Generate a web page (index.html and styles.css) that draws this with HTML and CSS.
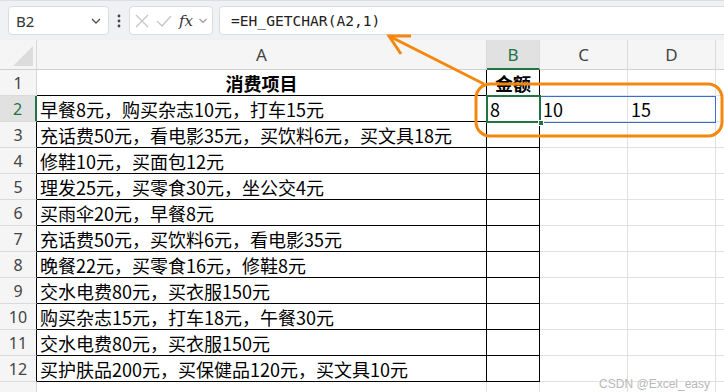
FILE: index.html
```html
<!DOCTYPE html>
<html lang="zh-CN">
<head>
    <meta charset="UTF-8">
    <title>EH_GETCHAR</title>
    <link rel="stylesheet" href="styles.css">
</head>
<body>
    <div class="toolbar">
        <div class="namebox">
            <span>B2</span>
            <svg width="12" height="8" viewBox="0 0 12 8"><path d="M2 2 L6 6 L10 2" fill="none" stroke="#555" stroke-width="1.4"/></svg>
        </div>
        <svg class="dots" width="4" height="16" viewBox="0 0 4 16"><circle cx="2" cy="3" r="1.4" fill="#444"/><circle cx="2" cy="8" r="1.4" fill="#444"/><circle cx="2" cy="13" r="1.4" fill="#444"/></svg>
        <div class="fxbox">
            <svg width="16" height="16" viewBox="0 0 16 16"><path d="M2 2 L14 14 M14 2 L2 14" stroke="#c4c4c4" stroke-width="1.3"/></svg>
            <svg width="18" height="16" viewBox="0 0 18 16"><path d="M2 8 L7 13 L16 3" fill="none" stroke="#c4c4c4" stroke-width="1.3"/></svg>
            <span class="fx">fx</span>
            <svg width="10" height="8" viewBox="0 0 10 8"><path d="M1.5 2 L5 5.5 L8.5 2" fill="none" stroke="#999" stroke-width="1.2"/></svg>
        </div>
        <div class="formula">=EH_GETCHAR(A2,1)</div>
    </div>

    <div class="sheet">
        <div class="row header">
            <div class="corner"><span class="tri"></span></div>
            <div class="ch">A</div>
            <div class="ch active">B</div>
            <div class="ch">C</div>
            <div class="ch">D</div>
            <div class="ch last"></div>
        </div>
        <div class="row">
            <div class="rh">1</div>
            <div class="c t th">消费项目</div>
            <div class="c t th">金额</div>
            <div class="c"></div><div class="c"></div><div class="c last"></div>
        </div>
        <div class="row">
            <div class="rh active">2</div>
            <div class="c t">早餐8元，购买杂志10元，打车15元</div>
            <div class="c t">8</div>
            <div class="c">10</div><div class="c">15</div><div class="c last"></div>
        </div>
        <div class="row">
            <div class="rh edge">3</div>
            <div class="c t">充话费50元，看电影35元，买饮料6元，买文具18元</div>
            <div class="c t"></div>
            <div class="c"></div><div class="c"></div><div class="c last"></div>
        </div>
        <div class="row">
            <div class="rh edge">4</div>
            <div class="c t">修鞋10元，买面包12元</div>
            <div class="c t"></div>
            <div class="c"></div><div class="c"></div><div class="c last"></div>
        </div>
        <div class="row">
            <div class="rh edge">5</div>
            <div class="c t">理发25元，买零食30元，坐公交4元</div>
            <div class="c t"></div>
            <div class="c"></div><div class="c"></div><div class="c last"></div>
        </div>
        <div class="row">
            <div class="rh edge">6</div>
            <div class="c t">买雨伞20元，早餐8元</div>
            <div class="c t"></div>
            <div class="c"></div><div class="c"></div><div class="c last"></div>
        </div>
        <div class="row">
            <div class="rh edge">7</div>
            <div class="c t">充话费50元，买饮料6元，看电影35元</div>
            <div class="c t"></div>
            <div class="c"></div><div class="c"></div><div class="c last"></div>
        </div>
        <div class="row">
            <div class="rh edge">8</div>
            <div class="c t">晚餐22元，买零食16元，修鞋8元</div>
            <div class="c t"></div>
            <div class="c"></div><div class="c"></div><div class="c last"></div>
        </div>
        <div class="row">
            <div class="rh edge">9</div>
            <div class="c t">交水电费80元，买衣服150元</div>
            <div class="c t"></div>
            <div class="c"></div><div class="c"></div><div class="c last"></div>
        </div>
        <div class="row">
            <div class="rh edge">10</div>
            <div class="c t">购买杂志15元，打车18元，午餐30元</div>
            <div class="c t"></div>
            <div class="c"></div><div class="c"></div><div class="c last"></div>
        </div>
        <div class="row">
            <div class="rh edge">11</div>
            <div class="c t">交水电费80元，买衣服150元</div>
            <div class="c t"></div>
            <div class="c"></div><div class="c"></div><div class="c last"></div>
        </div>
        <div class="row">
            <div class="rh edge">12</div>
            <div class="c t">买护肤品200元，买保健品120元，买文具10元</div>
            <div class="c t"></div>
            <div class="c"></div><div class="c"></div><div class="c last"></div>
        </div>
        <div class="row">
            <div class="rh"></div>
            <div class="c"></div><div class="c"></div>
            <div class="c"></div><div class="c"></div><div class="c last"></div>
        </div>

        <!-- spill range and active cell -->
        <div class="spill"></div>
        <div class="cursor"><span class="handle"></span></div>
    </div>

    <svg class="note" width="724" height="392" viewBox="0 0 724 392">
        <rect x="476" y="84" width="246" height="52" rx="14" fill="none" stroke="#f5870f" stroke-width="3"/>
        <path d="M484 84 L389 36" stroke="#f5870f" stroke-width="3" fill="none"/>
        <path d="M411 36 L389 36 L401 54" stroke="#f5870f" stroke-width="3" fill="none" stroke-linejoin="miter"/>
    </svg>

    <div class="mark">CSDN @Excel_easy</div>
</body>
</html>
```

FILE: styles.css
```css
* {
    box-sizing: border-box;
}

body {
    margin: 0;
    width: 724px;
    height: 392px;
    overflow: hidden;
    background: #fff;
    font-family: "Noto Sans", "Noto Sans CJK SC", sans-serif;
    position: relative;
}

.toolbar {
    height: 40px;
    background: #eff1f4;
    border-top: 1px solid #dcdee2;
    display: flex;
    align-items: center;
    padding: 0 0 0 8px;
}

.namebox {
    width: 101px;
    height: 29px;
    background: #fff;
    border: 1px solid #d9dce0;
    border-radius: 4px;
    display: flex;
    align-items: center;
    justify-content: space-between;
    padding: 0 6px 0 7px;
    font-size: 15px;
    color: #333;
}

.dots {
    margin: 0 8px;
}

.fxbox {
    width: 84px;
    height: 29px;
    background: #fff;
    border: 1px solid #d9dce0;
    border-radius: 4px;
    display: flex;
    align-items: center;
    padding: 0 3px 0 4px;
    gap: 5px;
}

.fx {
    font-family: "DejaVu Serif", serif;
    font-style: italic;
    font-size: 15px;
    color: #333;
    margin-left: 1px;
}

.formula {
    flex: 1;
    height: 29px;
    margin-left: 6px;
    margin-right: -8px;
    background: #fff;
    border: 1px solid #d9dce0;
    border-radius: 4px;
    display: flex;
    align-items: center;
    padding-left: 11px;
    font-family: "DejaVu Sans Mono", monospace;
    font-size: 14.6px;
    color: #222;
}

.sheet {
    position: relative;
}

.row {
    display: grid;
    grid-template-columns: 37px 450px 53px 88px 88px 1fr;
    height: 26px;
}

.row.header {
    height: 30px;
    background: #f5f5f5;
}

.corner {
    border-right: 1px solid #d8d8d8;
    border-bottom: 1px solid #d0d0d0;
    position: relative;
}

.tri {
    position: absolute;
    left: 13px;
    top: 6px;
    width: 0;
    height: 0;
    border-left: 20px solid transparent;
    border-bottom: 20px solid #dcdcdc;
}

.ch {
    border-right: 1px solid #dadada;
    border-bottom: 1px solid #d0d0d0;
    display: flex;
    align-items: center;
    justify-content: center;
    font-size: 17px;
    color: #444;
}

.ch.active {
    background: #e1e1e1;
    color: #217346;
    border-bottom: 2px solid #217346;
}

.ch.last, .c.last {
    border-right: none;
}

.rh {
    background: #f5f5f5;
    border-right: 1px solid #d8d8d8;
    border-bottom: 1px solid #dadada;
    display: flex;
    align-items: center;
    justify-content: center;
    font-size: 16px;
    color: #444;
}

.rh.edge {
    border-right-color: #000;
}

.rh.active {
    background: #e1e1e1;
    color: #217346;
    border-right: 2px solid #217346;
}

.c {
    border-right: 1px solid #e1e1e1;
    border-bottom: 1px solid #e1e1e1;
    padding-left: 3px;
    display: flex;
    align-items: center;
    font-family: "Noto Sans CJK SC", sans-serif;
    font-size: 18px;
    color: #000;
    white-space: nowrap;
    overflow: hidden;
}

.c.t {
    border-right-color: #000;
    border-bottom-color: #000;
}

.c.th {
    justify-content: center;
    font-weight: bold;
    padding-left: 0;
}

.spill {
    position: absolute;
    left: 486px;
    top: 56px;
    width: 230px;
    height: 27px;
    border: 1px solid #3a6bd3;
}

.cursor {
    position: absolute;
    left: 486px;
    top: 55px;
    width: 55px;
    height: 28px;
    border: 2px solid #217346;
}

.handle {
    position: absolute;
    right: -5px;
    bottom: -5px;
    width: 6px;
    height: 6px;
    background: #217346;
    border: 1px solid #fff;
}

.note {
    position: absolute;
    left: 0;
    top: 0;
    pointer-events: none;
}

.mark {
    position: absolute;
    right: 14px;
    bottom: 1px;
    font-family: "Liberation Sans", sans-serif;
    font-size: 12px;
    color: #b8b8b8;
    text-shadow: 0 0 2px #fff;
}
```
